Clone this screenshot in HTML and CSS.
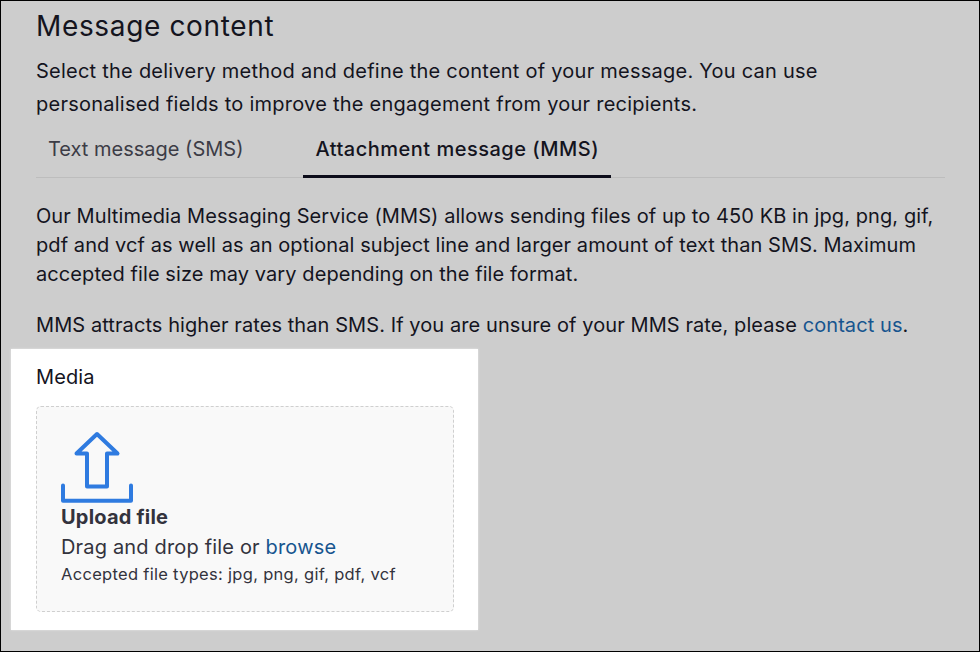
FILE: index.html
```html
<!DOCTYPE html>
<html lang="en">
<head>
<meta charset="utf-8">
<title>Message content</title>
<link rel="stylesheet" href="styles.css">
</head>
<body>
<main class="frame">
  <section class="content">
    <h1 class="title">Message content</h1>
    <p class="intro">Select the delivery method and define the content of your message. You can use personalised fields to improve the engagement from your recipients.</p>
    <nav class="tabs">
      <a class="tab">Text message (SMS)</a>
      <a class="tab tab-active">Attachment message (MMS)</a>
    </nav>
    <p class="body-text">Our Multimedia Messaging Service (MMS) allows sending files of up to 450 KB in jpg, png, gif, pdf and vcf as well as an optional subject line and larger amount of text than SMS. Maximum accepted file size may vary depending on the file format.</p>
    <p class="body-text rates">MMS attracts higher rates than SMS. If you are unsure of your MMS rate, please <a class="link">contact us</a>.</p>
  </section>
  <section class="media">
    <div class="media-label">Media</div>
    <div class="dropzone">
      <svg class="upload-icon" viewBox="0 0 74 74" fill="none" stroke="#2f7be0" stroke-width="4" stroke-linejoin="round" stroke-linecap="round">
        <path d="M36 3 L56.5 22.5 L46 22.5 L46 55.5 L26 55.5 L26 22.5 L15.5 22.5 Z"/>
        <path d="M2 54.5 L2 69.7 L70 69.7 L70 54.5"/>
      </svg>
      <div class="upload-title">Upload file</div>
      <div class="upload-line">Drag and drop file or <a class="link">browse</a></div>
      <div class="upload-types">Accepted file types: jpg, png, gif, pdf, vcf</div>
    </div>
  </section>
</main>
</body>
</html>
```
FILE: styles.css
```css
* { box-sizing: border-box; }
html, body { margin: 0; padding: 0; }
body {
  width: 980px;
  height: 652px;
  overflow: hidden;
  font-family: "Inter", "Liberation Sans", sans-serif;
  color: #14141e;
}
.frame {
  width: 980px;
  height: 652px;
  background: #cdcdcd;
  border: 1px solid #000;
  padding-left: 10px;
}
.content { padding: 7px 34px 0 25px; }
.title {
  margin: 0;
  font-size: 28px;
  font-weight: 400;
  line-height: 36px;
  letter-spacing: 0.65px;
}
.intro {
  max-width: 880px;
  margin: 11px 0 0;
  font-size: 20px;
  line-height: 33px;
  letter-spacing: 0.24px;
}
.tabs {
  display: flex;
  margin-top: 2px;
  height: 55px;
  border-bottom: 1px solid #bdbdbd;
}
.tab {
  padding: 13px 12px 0;
  font-size: 20px;
  line-height: 26px;
  color: #3c3c46;
}
.tab-active {
  margin-left: 48px;
  height: 55px;
  color: #14141e;
  font-weight: 500;
  letter-spacing: 0.5px;
  border-bottom: 3px solid #0c0c1a;
}
.body-text {
  margin: 24px 0 0;
  font-size: 20px;
  line-height: 29px;
  letter-spacing: 0.08px;
}
.rates { margin-top: 22px; }
.link { color: #17558f; }
.media {
  width: 467px;
  height: 281px;
  margin-top: 9px;
  padding: 15px 25px 0;
  background: #fff;
  box-shadow: 0 0 2px #e8e8e8;
}
.media-label {
  font-size: 20px;
  line-height: 26px;
  letter-spacing: 0.1px;
}
.dropzone {
  width: 418px;
  height: 206px;
  margin-top: 16px;
  padding: 24px 24px 0;
  background: #f9f9f9;
  border: 1px dashed #cfcfcf;
  border-radius: 5px;
}
.upload-icon { display: block; margin-bottom: -1px; width: 74px; height: 74px; }
.upload-title {
  font-size: 20px;
  font-weight: 700;
  line-height: 26px;
  letter-spacing: 0.2px;
  color: #33333d;
}
.upload-line {
  margin-top: 4px;
  font-size: 20px;
  line-height: 26px;
  letter-spacing: 0.17px;
  color: #33333d;
}
.upload-types {
  font-size: 16.5px;
  line-height: 28px;
  letter-spacing: 0.3px;
  color: #33333d;
}
```
